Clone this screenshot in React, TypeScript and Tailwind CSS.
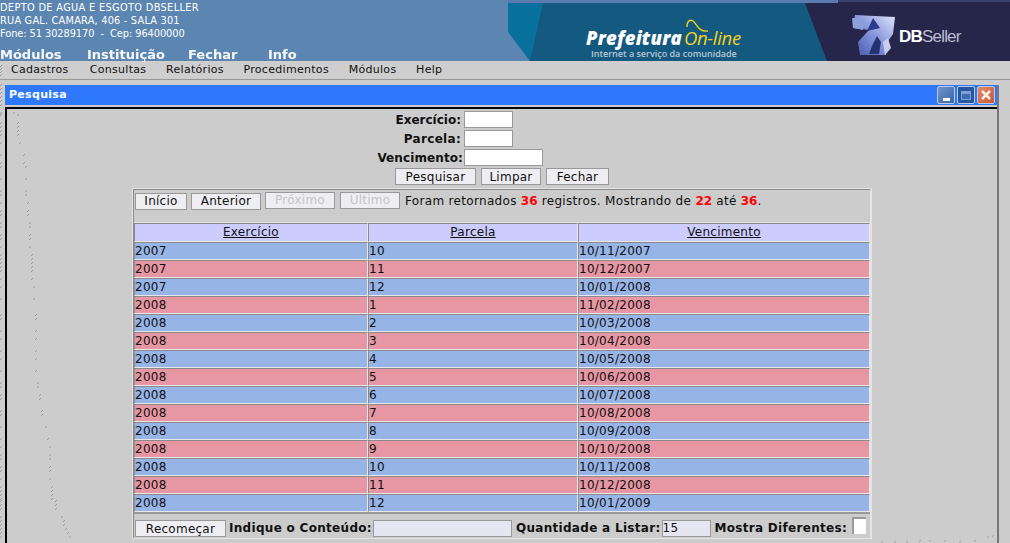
const dejavu = "font-['DejaVu_Sans',Verdana,sans-serif]";

const rows = [
  ["2007", "10", "10/11/2007"],
  ["2007", "11", "10/12/2007"],
  ["2007", "12", "10/01/2008"],
  ["2008", "1", "11/02/2008"],
  ["2008", "2", "10/03/2008"],
  ["2008", "3", "10/04/2008"],
  ["2008", "4", "10/05/2008"],
  ["2008", "5", "10/06/2008"],
  ["2008", "6", "10/07/2008"],
  ["2008", "7", "10/08/2008"],
  ["2008", "8", "10/09/2008"],
  ["2008", "9", "10/10/2008"],
  ["2008", "10", "10/11/2008"],
  ["2008", "11", "10/12/2008"],
  ["2008", "12", "10/01/2009"],
];

const specks = [
  [42, 36], [54, 42], [54, 66], [54, 78], [54, 90], [54, 102], [60, 126], [72, 162], [72, 186], [78, 198],
  [78, 234], [78, 270], [78, 282], [84, 306], [84, 330], [84, 342], [90, 366], [90, 378], [90, 402], [90, 414],
  [90, 438], [96, 462], [96, 474], [96, 486], [96, 498], [96, 510], [96, 534], [102, 558], [102, 594], [108, 642],
  [108, 654], [108, 690], [108, 714], [108, 750], [108, 774], [108, 810], [114, 846], [114, 858], [120, 882], [120, 894],
  [126, 930], [126, 942], [138, 978], [144, 1014], [150, 1038], [150, 1062], [150, 1074], [150, 1098], [150, 1110], [150, 1134],
  [156, 1158], [156, 1170], [156, 1182], [156, 1194], [168, 1200], [168, 1212], [168, 1224], [186, 1248], [192, 1260], [192, 1272],
  [198, 1284], [204, 1296], [210, 1308],
];

const cornerSpecks = [
  [882, 541], [895, 541], [907, 541], [920, 540], [930, 540], [945, 540], [960, 541], [975, 540], [988, 536], [993, 535],
];

const edgeSpecks = [65, 68, 71, 74, 84, 88, 92, 96, 100, 104];

function Specks() {
  return (
    <svg className="absolute inset-0 pointer-events-none" width="1010" height="543" viewBox="0 0 1010 543" shapeRendering="crispEdges">
      <g fill="#9a9a9a">
        {specks.map(([x, y], i) => (
          <g key={i}>
            <rect x={x / 3} y={y / 3 + 100} width="1" height="1" />
            <rect x={x / 3 - 1} y={y / 3 + 101} width="1" height="1" />
            <rect x="1" y={y / 3 + 100} width="1" height="1" />
            <rect x="0" y={y / 3 + 101} width="1" height="1" />
          </g>
        ))}
        {cornerSpecks.map(([x, y], i) => (
          <g key={i}>
            <rect x={x} y={y} width="1" height="1" />
            <rect x={x - 1} y={y + 1} width="1" height="1" />
          </g>
        ))}
        {edgeSpecks.map((y, i) => (
          <g key={i}>
            <rect x="1" y={y} width="1" height="1" />
            <rect x="0" y={y + 1} width="1" height="1" />
          </g>
        ))}
      </g>
    </svg>
  );
}

function Banner() {
  return (
    <div className="relative w-[502px] h-[61px] shrink-0 overflow-hidden bg-[#25264a]">
      <svg className="absolute inset-0" width="502" height="61" viewBox="0 0 502 61">
        <defs>
          <linearGradient id="dbs" x1="1" y1="0" x2="0" y2="1">
            <stop offset="0" stopColor="#dfe4fa" />
            <stop offset="0.55" stopColor="#7f8fd8" />
            <stop offset="1" stopColor="#4656a8" />
          </linearGradient>
          <filter id="soft">
            <feGaussianBlur stdDeviation="0.7" />
          </filter>
        </defs>
        <rect width="502" height="61" fill="#25264a" />
        <polygon points="0,3 297,3 319,61 0,61" fill="#14597f" />
        <polygon points="0,3 35,3 22,61 0,32" fill="#08709d" />
        <polygon points="0,32 22,61 0,61" fill="#5b86b2" />
        <rect x="0" y="0" width="330" height="3" fill="#5b7ab0" />
        <rect x="330" y="0" width="172" height="2" fill="#3d4170" />
        <path d="M179 27 C179 21 182 19 185 21 C189 24 190 32 200 31" fill="none" stroke="#f2d21c" strokeWidth="1.4" />
        <g filter="url(#soft)">
          <path d="M347 15 L387 17 L385 34 L378 44 L378 55 L352 55 L350 42 L361 30 L345 28 Z" fill="url(#dbs)" />
          <path d="M344 18 L355 18 L355 30 L345 28 Z" fill="#8ea0dc" />
          <path d="M365 18 L372 28 L359 31 Z" fill="#2e3a8c" />
          <path d="M364 46 L369 36 L373 42 L371 54 L361 54 Z" fill="#27306f" />
          <path d="M375 42 L380 38 L383 48 L377 55 Z" fill="#c6cdf0" />
        </g>
      </svg>
      <div className="absolute left-[78px] top-[29px] flex items-baseline leading-none">
        <span className="font-['Open_Sans',sans-serif] text-[18.5px] font-extrabold italic text-white tracking-[0.2px]">Prefeitura</span>
        <span className="ml-[2px] font-['Open_Sans',sans-serif] text-[18.5px] italic text-[#f2d21c] tracking-[-0.3px]">On-line</span>
      </div>
      <div className="absolute left-[83px] top-[48px] font-['Open_Sans',sans-serif] text-[9px] leading-[11px] font-semibold text-[#b8c7d3]">
        Internet a serviço da comunidade
      </div>
      <div className="absolute left-[391px] top-[27px] font-['Liberation_Sans',sans-serif] text-[17px] leading-[20px] tracking-[-0.8px] text-[#b9bcd2]">
        <span className="font-bold text-white">DB</span>Seller
      </div>
    </div>
  );
}

function WinButton({ color, children }: { color: string; children: React.ReactNode }) {
  return (
    <div className={`w-[18px] h-[18px] border border-[#b9c9e6] rounded-[2px] flex items-center justify-center ${color}`}>
      {children}
    </div>
  );
}

function Btn({ label, w, disabled, extra = "" }: { label: string; w: string; disabled?: boolean; extra?: string }) {
  return (
    <div
      className={`${w} ${extra} h-[17px] shrink-0 border border-[#999] bg-[#eeeef2] flex items-center justify-center text-[12px] leading-none tracking-[0.25px] ${disabled ? "text-[#c4c4c8]" : "text-[#111]"}`}
    >
      {label}
    </div>
  );
}

function Field({ label, w, labelW, gap, track }: { label: string; w: string; labelW: string; gap: string; track: string }) {
  return (
    <div className="flex items-center h-[19px]">
      <div className={`${labelW} ${track} text-right font-bold text-[12px] text-[#111]`}>{label}</div>
      <div className={`${w} ${gap} h-[17px] bg-white border border-[#999]`} />
    </div>
  );
}

const cellEdge = "border border-t-[#8a8a8a] border-l-[#8a8a8a] border-b-[#e8e8e8] border-r-[#e8e8e8]";

export default function App() {
  return (
    <div className={`${dejavu} relative w-[1010px] h-[543px] overflow-hidden bg-[#cccccc]`}>
      <header className="flex h-[61px] bg-[#5b86b2] text-white">
        <div className="flex-1 flex flex-col">
          <div className="h-[1px] bg-[#4b5c92]" />
          <div className="pt-[1px] text-[9.8px] leading-[13px]">
            <div className="tracking-[0.33px]">DEPTO DE AGUA E ESGOTO DBSELLER</div>
            <div className="tracking-[0.2px]">RUA GAL. CAMARA, 406 - SALA 301</div>
            <div className="whitespace-pre tracking-[-0.06px]">Fone: 51 30289170  -  Cep: 96400000</div>
          </div>
          <nav className="mt-[7px] flex text-[13px] leading-[15px] font-bold opacity-95">
            <span className="w-[87px]">Módulos</span>
            <span className="w-[101px]">Instituição</span>
            <span className="w-[80px]">Fechar</span>
            <span>Info</span>
          </nav>
        </div>
        <Banner />
      </header>

      <div className="h-[19px] pt-[1px] border-b border-[#999] flex items-center pl-[11px] gap-[19.7px] text-[11px] tracking-[0.3px] text-[#111] bg-[#cecece]">
        <span className="w-[59px]">Cadastros</span>
        <span>Consultas</span>
        <span>Relatórios</span>
        <span>Procedimentos</span>
        <span>Módulos</span>
        <span>Help</span>
      </div>

      <main className="ml-[5px] mt-[5px] w-[994px] border-r-2 border-[#777]">
        <div className="h-[20px] bg-[#2e78fe] flex items-center justify-between pl-[4px] pr-[2px]">
          <span className="text-[11px] font-bold text-white tracking-[0.3px]">Pesquisa</span>
          <div className="flex gap-[2px]">
            <WinButton color="bg-gradient-to-br from-[#7396cb] to-[#3a64a8]">
              <div className="w-[7px] h-[3px] bg-white mt-[8px]" />
            </WinButton>
            <WinButton color="bg-[#27589f]">
              <div className="w-[10px] h-[9px] bg-[#3f6cb0] border border-[#7fa0d6] border-t-[3px]" />
            </WinButton>
            <WinButton color="bg-gradient-to-br from-[#e08a66] to-[#c9583a]">
              <svg width="12" height="12" viewBox="0 0 12 12">
                <path d="M2 2L10 10M10 2L2 10" stroke="#f5efe8" strokeWidth="2.6" />
              </svg>
            </WinButton>
          </div>
        </div>

        <div className="mt-[2px] border-t-2 border-l-2 border-black h-[440px] pt-[1px]">
          <Field label="Exercício:" w="w-[49px]" labelW="w-[454px]" gap="ml-[3px]" track="" />
          <Field label="Parcela:" w="w-[49px]" labelW="w-[454px]" gap="ml-[3px]" track="tracking-[0.3px]" />
          <Field label="Vencimento:" w="w-[79px]" labelW="w-[456px]" gap="ml-[1px]" track="tracking-[0.1px]" />

          <div className="flex gap-[5px] ml-[388px] mt-[1px]">
            <Btn label="Pesquisar" w="w-[81px]" />
            <Btn label="Limpar" w="w-[60px]" />
            <Btn label="Fechar" w="w-[63px]" />
          </div>

          <section className="ml-[125px] mt-[3px] w-[740px] border border-[#e4e4e4] text-[12px] tracking-[0.27px] text-[#111]">
            <div className="border border-t-[#8a8a8a] border-l-[#8a8a8a] border-r-[#e4e4e4] border-b-0">
              <div className="flex items-center gap-[4px] h-[33px] pl-[1px] pb-[10px] border-b border-[#e4e4e4] whitespace-nowrap">
                <Btn label="Início" w="w-[52px]" />
                <Btn label="Anterior" w="w-[70px]" />
                <Btn label="Próximo" w="w-[70px]" disabled extra="mb-[2px]" />
                <Btn label="Último" w="w-[60px]" disabled extra="ml-[1px] mb-[2px]" />
                <span className="ml-[1px] tracking-[0.32px]">
                  Foram retornados <b className="text-[#ff0000] tracking-normal">36</b> registros. Mostrando de{" "}
                  <b className="text-[#ff0000] tracking-normal">22</b> até <b className="text-[#ff0000] tracking-normal">36</b>.
                </span>
              </div>

              <div className="grid grid-cols-[234px_210px_292px]">
                <div className={`h-[19px] bg-[#ccccff] text-center underline leading-[17px] ${cellEdge}`}>Exercício</div>
                <div className={`h-[19px] bg-[#ccccff] text-center underline leading-[17px] ${cellEdge}`}>Parcela</div>
                <div className={`h-[19px] bg-[#ccccff] text-center underline leading-[17px] ${cellEdge}`}>Vencimento</div>
                {rows.map((r, i) =>
                  r.map((cell, j) => (
                    <div
                      key={`${i}-${j}`}
                      className={`h-[18px] leading-[16px] ${cellEdge} ${i % 2 === 0 ? "bg-[#96b4e6]" : "bg-[#e796a3]"}`}
                    >
                      {cell}
                    </div>
                  )),
                )}
              </div>

              <div className="flex items-end h-[26px] pb-[1px] pl-[1px] border-t-2 border-[#999] whitespace-nowrap tracking-[0.3px] leading-[17px]">
                <Btn label="Recomeçar" w="w-[91px]" />
                <b className="ml-[3px]">Indique o Conteúdo:</b>
                <div className="ml-[1px] w-[139px] h-[17px] bg-[#e6e6f2] border border-[#999]" />
                <b className="ml-[4px]">Quantidade a Listar:</b>
                <div className="ml-[1px] w-[49px] h-[17px] bg-[#e6e6f2] border border-[#999] leading-[15px] font-normal">15</div>
                <b className="ml-[4px]">Mostra Diferentes:</b>
                <div className="ml-[5px] mb-[3px] w-[14px] h-[17px] bg-white border-t-2 border-l-2 border-[#999]" />
              </div>
            </div>
          </section>
        </div>
      </main>
      <Specks />
    </div>
  );
}
